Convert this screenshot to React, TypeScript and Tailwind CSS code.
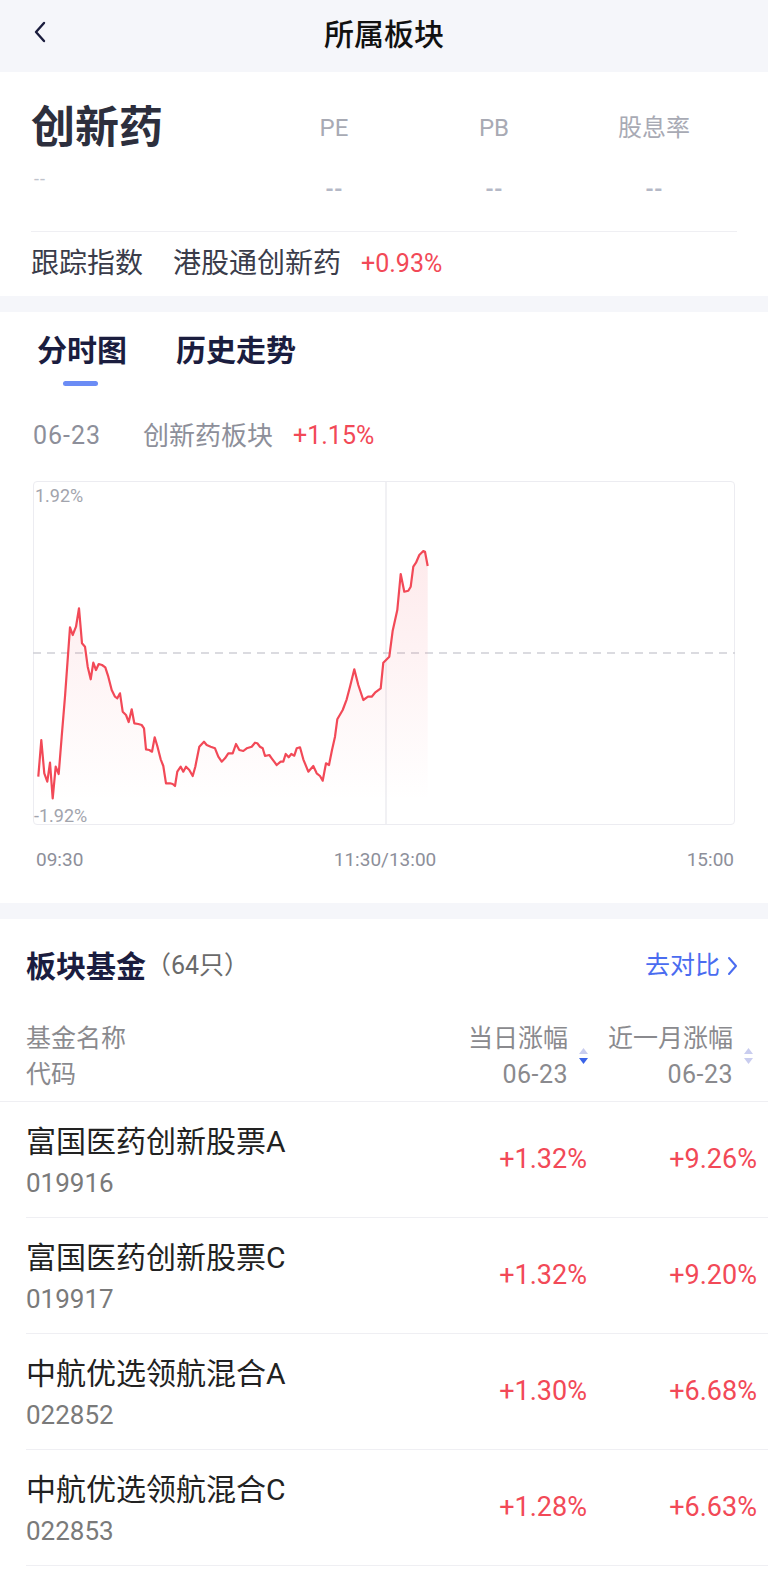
import React from "react";

const RED = "#f24957";

// line points read off the reference (3x crop coords), mapped into chart space
const raw: [number, number][] = [
  [115, 920], [124, 810], [133, 910], [142, 935], [150, 878], [158, 985], [167, 890], [176, 912],
  [185, 800], [195, 680], [210, 472], [218, 495], [228, 470], [237, 415], [246, 520], [255, 530],
  [263, 590], [272, 628], [280, 578], [288, 600], [296, 582], [306, 585], [316, 592], [325, 620],
  [335, 660], [345, 680], [352, 685], [360, 670], [368, 725], [378, 735], [386, 756], [395, 718],
  [403, 760], [415, 762], [425, 765], [432, 775], [438, 838], [448, 840], [456, 845], [464, 802],
  [472, 828], [482, 868], [490, 888], [498, 940], [510, 940], [518, 942], [525, 948], [532, 905],
  [542, 890], [550, 905], [558, 890], [568, 900], [578, 918], [586, 890], [598, 830], [612, 815],
  [620, 825], [632, 830], [645, 835], [655, 860], [665, 875], [675, 865], [685, 850], [698, 850],
  [708, 822], [718, 840], [730, 843], [740, 835], [755, 830], [765, 818], [772, 820], [780, 830],
  [788, 835], [795, 858], [808, 855], [815, 865], [830, 885], [842, 875], [850, 875], [857, 852],
  [866, 862], [874, 852], [883, 857], [890, 835], [900, 832], [910, 868], [925, 905], [940, 888],
  [950, 910], [960, 918], [968, 932], [978, 880], [987, 885], [996, 840], [1005, 800], [1012, 748],
  [1028, 720], [1040, 688], [1050, 650], [1063, 598], [1075, 645], [1090, 690], [1104, 680],
  [1115, 680], [1125, 668], [1142, 655], [1150, 578], [1168, 560], [1178, 482], [1192, 420],
  [1202, 312], [1213, 365], [1225, 362], [1232, 350], [1240, 290], [1248, 278], [1258, 255],
  [1270, 243], [1275, 245], [1283, 288],
];
const pts = raw.map(([x, y]) => [x / 3 - 33, y / 3 - 11] as [number, number]);
const linePath = pts.map(([x, y], i) => `${i ? "L" : "M"}${x.toFixed(1)} ${y.toFixed(1)}`).join(" ");
const areaPath = `${linePath} L${pts[pts.length - 1][0].toFixed(1)} 320 L${pts[0][0].toFixed(1)} 320 Z`;

const funds = [
  { name: "富国医药创新股票A", code: "019916", day: "+1.32%", month: "+9.26%" },
  { name: "富国医药创新股票C", code: "019917", day: "+1.32%", month: "+9.20%" },
  { name: "中航优选领航混合A", code: "022852", day: "+1.30%", month: "+6.68%" },
  { name: "中航优选领航混合C", code: "022853", day: "+1.28%", month: "+6.63%" },
];

const SortArrows = ({ active }: { active?: boolean }) => (
  <svg width="11" height="20" viewBox="0 0 11 20" className="ml-[10px] self-center">
    <path d="M5.5 1 L10 7 L1 7 Z" fill="#c9cdef" />
    <path d="M1 11 L10 11 L5.5 17 Z" fill={active ? "#3a63e8" : "#c9cdef"} />
  </svg>
);

const Chart = () => (
  <div className="relative ml-[33px] h-[344px] w-[702px] rounded-[4px] border border-[#ececf1]">
    <svg width="702" height="344" viewBox="0 0 702 344" className="absolute left-[-1px] top-[-1px]">
      <defs>
        <linearGradient id="fill" x1="0" y1="60" x2="0" y2="320" gradientUnits="userSpaceOnUse">
          <stop offset="0" stopColor={RED} stopOpacity="0.12" />
          <stop offset="1" stopColor={RED} stopOpacity="0" />
        </linearGradient>
      </defs>
      <line x1="353" y1="0" x2="353" y2="344" stroke="#ececf1" strokeWidth="1.5" />
      <line x1="0" y1="172" x2="702" y2="172" stroke="#cfd0d6" strokeWidth="1.5" strokeDasharray="8 6" />
      <path d={areaPath} fill="url(#fill)" />
      <path d={linePath} fill="none" stroke={RED} strokeWidth="2.2" strokeLinejoin="round" />
    </svg>
    <span className="absolute left-[1px] top-[3px] text-[18px] leading-[22px] text-[#a2a4ad]">1.92%</span>
    <span className="absolute bottom-[-3px] left-[0px] text-[18px] leading-[22px] text-[#a2a4ad]">-1.92%</span>
  </div>
);

export default function App() {
  return (
    <div className="min-h-[1571px] bg-[#f5f6fa] font-[Roboto,'Noto_Sans_CJK_SC',sans-serif]">
      {/* nav */}
      <div className="grid h-[72px] grid-cols-[80px_1fr_80px] items-center">
        <div className="-mt-[8px] pl-[33px]">
          <svg width="14" height="22" viewBox="0 0 14 22">
            <path d="M11 2 L3 11 L11 20" stroke="#1a1c3d" strokeWidth="2.4" fill="none" strokeLinecap="round" strokeLinejoin="round" />
          </svg>
        </div>
        <div className="-mt-[2px] text-center text-[30px] font-medium leading-[40px] text-[#111]">所属板块</div>
      </div>

      {/* sector summary */}
      <div className="bg-white px-[31px]">
        <div className="flex h-[160px] border-b border-[#efeff3]">
          <div className="flex-1 pt-[26px]">
            <div className="h-[60px] text-[44px] font-bold leading-[60px] text-[#2d2f3d]">创新药</div>
            <div className="mt-[11px] pl-[3px] text-[18px] leading-[20px] tracking-[1px] text-[#c0c3cc]">--</div>
          </div>
          {["PE", "PB", "股息率"].map((l) => (
            <div key={l} className="w-[160px] pt-[26px] text-center">
              <div className="h-[60px] text-[24px] leading-[60px] text-[#a8aab4]">{l}</div>
              <div className="mt-[22px] text-[22px] font-bold leading-[20px] text-[#b4b8c6]">--</div>
            </div>
          ))}
          <div className="w-[3px]" />
        </div>
        <div className="flex h-[64px] items-center text-[28px] text-[#3a3c4a]">
          <span>跟踪指数</span>
          <span className="ml-[30px]">港股通创新药</span>
          <span className="ml-[20px] text-[25px]" style={{ color: RED }}>+0.93%</span>
        </div>
      </div>

      {/* intraday chart */}
      <div className="mt-4 bg-white pb-[31px]">
        <div className="flex pl-[37px] pt-[19px]">
          <div className="flex flex-col items-center">
            <span className="text-[30px] font-bold leading-[40px] text-[#1b1d3f]">分时图</span>
            <span className="-ml-[4px] mt-[10px] h-[5px] w-[35px] rounded-full bg-[#6b8cf5]" />
          </div>
          <span className="ml-[49px] text-[30px] font-bold leading-[40px] text-[#1b1d3f]">历史走势</span>
        </div>
        <div className="mt-[35px] flex h-[30px] items-center pl-[33px]">
          <span className="w-[110px] text-[25px] tracking-[1px] text-[#8d8f9a]">06-23</span>
          <span className="text-[26px] text-[#8d8f9a]">创新药板块</span>
          <span className="ml-[20px] text-[25px]" style={{ color: RED }}>+1.15%</span>
        </div>
        <div className="mt-[30px]">
          <Chart />
        </div>
        <div className="mt-[23px] flex h-[24px] items-center justify-between pl-[36px] pr-[34px] text-[19px] text-[#8d8f9a]">
          <span>09:30</span>
          <span>11:30/13:00</span>
          <span>15:00</span>
        </div>
      </div>

      {/* funds */}
      <div className="mt-4 bg-white pb-[8px]">
        <div className="box-content flex h-[36px] items-center justify-between pl-[26px] pr-[28px] pt-[29px]">
          <div className="flex items-center">
            <span className="text-[30px] font-bold text-[#1b1d3f]">板块基金</span>
            <span className="text-[25px] text-[#6a6a6a]">（64只）</span>
          </div>
          <div className="flex items-center text-[25px] text-[#4a6cf0]">
            <span>去对比</span>
            <svg width="14" height="22" viewBox="0 0 14 22" className="ml-[6px]">
              <path d="M3 3 L10 11 L3 19" stroke="#4a6cf0" strokeWidth="2" fill="none" strokeLinecap="round" strokeLinejoin="round" />
            </svg>
          </div>
        </div>
        <div className="flex border-b border-[#efeff3] pb-[8px] pl-[26px] pr-[14px] pt-[37px] text-[25px] leading-[36px] text-[#8a8a8e]">
          <div className="flex-1">
            <div>基金名称</div>
            <div>代码</div>
          </div>
          <div className="flex w-[170px] justify-end">
            <div className="text-right">
              <div>当日涨幅</div>
              <div className="tracking-[0.5px]">06-23</div>
            </div>
            <SortArrows active />
          </div>
          <div className="flex w-[165px] justify-end">
            <div className="text-right">
              <div>近一月涨幅</div>
              <div className="tracking-[0.5px]">06-23</div>
            </div>
            <SortArrows />
          </div>
        </div>
        {funds.map((f) => (
          <div key={f.code} className="ml-[26px] flex items-center border-b border-[#efeff3] pr-[11px]">
            <div className="flex-1 pb-[19px] pt-[22px]">
              <div className="text-[30px] leading-[36px] text-[#222]">{f.name}</div>
              <div className="mt-[8px] text-[26px] leading-[30px] text-[#7a7a7a]">{f.code}</div>
            </div>
            <div className="w-[150px] text-right text-[27px]" style={{ color: RED }}>{f.day}</div>
            <div className="w-[170px] text-right text-[27px]" style={{ color: RED }}>{f.month}</div>
          </div>
        ))}
      </div>
    </div>
  );
}
